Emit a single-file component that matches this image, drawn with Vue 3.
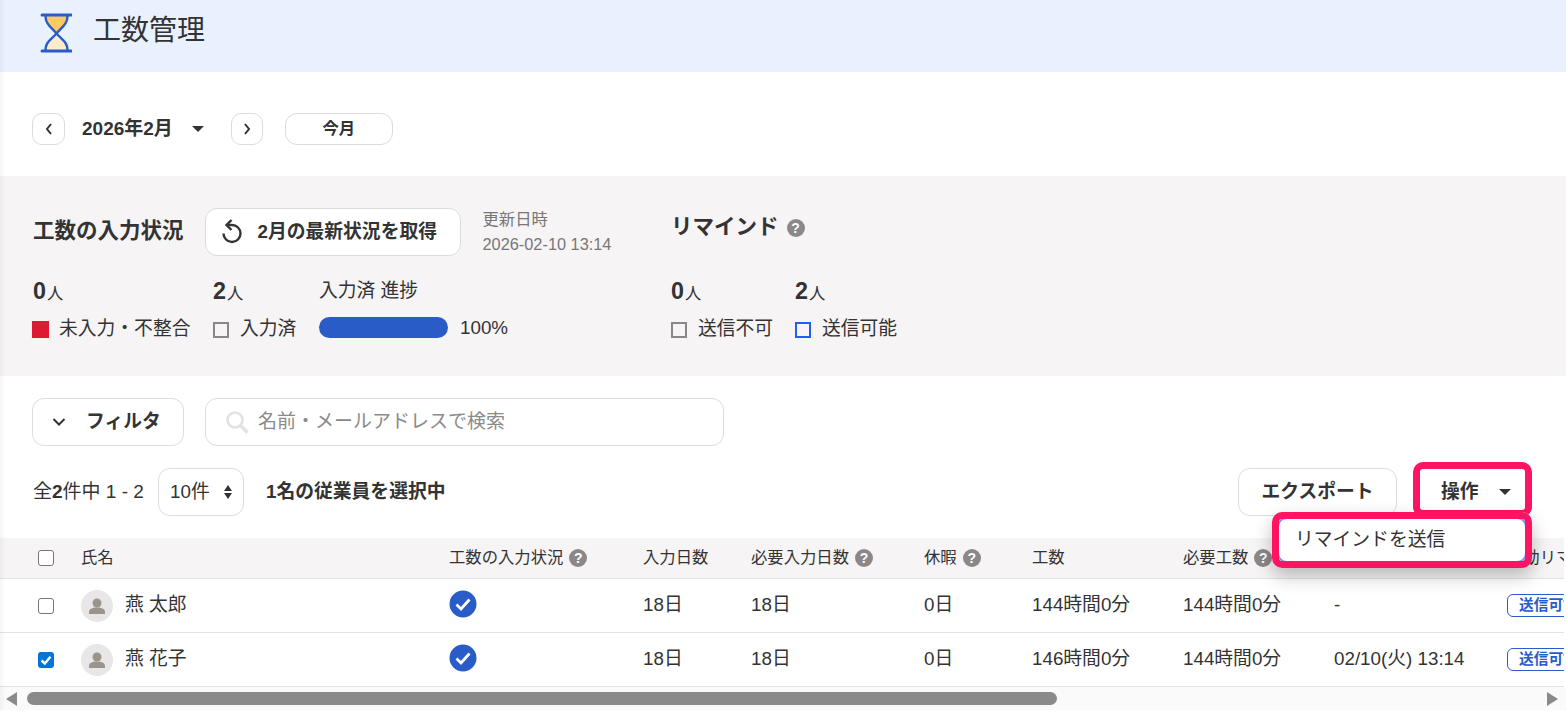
<template>
  <div class="page">
    <div class="edge"></div>
    <header class="head">
      <svg class="glass" viewBox="0 0 32 40" width="32" height="40">
        <path d="M16.500 24C21 26 27 31 27 37H6C6 31 12 26 16.500 24z" fill="#fdeccb" />
        <path d="M6 3H27C27 8 25 11 22.500 14L16.500 20 10.500 14C8 11 6 8 6 3z" fill="#ffc966" />
        <path d="M5.500 3C5.500 11 11 14 16.500 20.500 22 27 27.500 29 27.500 37M27.500 3C27.500 11 22 14 16.500 20.500 11 27 5.500 29 5.500 37" fill="none" stroke="#2a5cc8" stroke-width="2.400" />
        <path d="M2 2h29M2 38h29" fill="none" stroke="#2a5cc8" stroke-width="3" stroke-linecap="round" />
      </svg>
      <h1>工数管理</h1>
    </header>

    <div class="month-row">
      <button class="mini">
        <svg viewBox="0 0 10 12" width="10" height="12"><path d="M7 1 3 6l4 5" class="chev" /></svg>
      </button>
      <span class="month">2026年2月</span>
      <span class="tri month-tri"></span>
      <button class="mini next">
        <svg viewBox="0 0 10 12" width="10" height="12"><path d="M3 1l4 5-4 5" class="chev" /></svg>
      </button>
      <button class="today">今月</button>
    </div>

    <section class="summary">
      <div class="group input-group">
        <div class="group-head">
          <h2>工数の入力状況</h2>
          <button class="refresh">
            <svg class="reload" viewBox="0 0 24 24" width="24" height="24">
              <path d="M7 5h4a8.500 8.500 0 1 1-8.500 8.500" fill="none" stroke="#333" stroke-width="2.400" />
              <path d="M10.500 0 5.500 5l5 5" fill="none" stroke="#333" stroke-width="2.400" />
            </svg>
            <span>2月の最新状況を取得</span>
          </button>
          <div class="updated">
            <div>更新日時</div>
            <div>2026-02-10 13:14</div>
          </div>
        </div>
        <div class="stats input-stats">
          <div class="count"><b>0</b>人</div>
          <div class="count"><b>2</b>人</div>
          <div class="count plain">入力済 進捗</div>
          <div class="legend"><i class="box red"></i>未入力・不整合</div>
          <div class="legend"><i class="box"></i>入力済</div>
          <div class="legend">
            <div class="bar"></div>
            <span class="pct">100%</span>
          </div>
        </div>
      </div>
      <div class="group">
        <div class="group-head remind-head">
          <h2>リマインド</h2>
          <span class="help">?</span>
        </div>
        <div class="stats remind-stats">
          <div class="count"><b>0</b>人</div>
          <div class="count"><b>2</b>人</div>
          <div class="legend"><i class="box"></i>送信不可</div>
          <div class="legend"><i class="box blue"></i>送信可能</div>
        </div>
      </div>
    </section>

    <div class="filter-row">
      <button class="filter">
        <svg viewBox="0 0 14 10" width="14" height="10"><path d="M1.500 2 7 7.500 12.500 2" class="chev" /></svg>
        <span>フィルタ</span>
      </button>
      <div class="search">
        <svg viewBox="0 0 24 24" width="24" height="24">
          <circle cx="10" cy="10" r="7.500" fill="none" stroke="#e2e2e2" stroke-width="2.500" />
          <path d="M15.500 15.500 22.500 22.500" stroke="#e2e2e2" stroke-width="3.500" />
        </svg>
        <span>名前・メールアドレスで検索</span>
      </div>
    </div>

    <div class="tool-row">
      <div class="total">全<b>2</b>件中 1 - 2</div>
      <div class="per-page">
        <span>10件</span>
        <span class="updown"><i class="up"></i><i class="down"></i></span>
      </div>
      <div class="selected">1名の従業員を選択中</div>
      <div class="spacer"></div>
      <button class="export">エクスポート</button>
      <div class="op-wrap">
        <button class="op">操作<span class="tri op-tri"></span></button>
        <div class="op-mark"></div>
        <div class="menu">
          <div class="menu-item">リマインドを送信</div>
        </div>
      </div>
    </div>

    <div class="table-wrap">
      <table>
        <colgroup>
          <col v-for="w in colWidths" :key="w.id" :style="{ width: w.px + 'px' }" />
        </colgroup>
        <thead>
          <tr>
            <th class="check-cell"><span class="check"></span></th>
            <th v-for="col in columns" :key="col.label">
              <span class="th-in">{{ col.label }}<span v-if="col.help" class="help small">?</span></span>
            </th>
          </tr>
        </thead>
        <tbody>
          <tr v-for="row in rows" :key="row.name">
            <td class="check-cell">
              <span class="check" :class="{ on: row.checked }">
                <svg v-if="row.checked" viewBox="0 0 16 16" width="16" height="16"><path d="M3.500 8.500 6.800 11.500 12.500 4.800" fill="none" stroke="#fff" stroke-width="2.400" /></svg>
              </span>
            </td>
            <td>
              <div class="person">
                <span class="avatar">
                  <svg viewBox="0 0 32 32" width="32" height="32">
                    <circle cx="16" cy="13" r="4.500" fill="#9a958c" />
                    <path d="M8 24v-2c0-3 3-4.500 8-4.500s8 1.500 8 4.500v2z" fill="#9a958c" />
                  </svg>
                </span>
                <span>{{ row.name }}</span>
              </div>
            </td>
            <td>
              <svg class="done" viewBox="0 0 28 28" width="28" height="28">
                <circle cx="14" cy="14" r="13.500" fill="#2a5cc8" />
                <path d="M7.500 14.500 12 19l8.500-9.500" fill="none" stroke="#fff" stroke-width="2.800" />
              </svg>
            </td>
            <td>{{ row.days }}</td>
            <td>{{ row.needDays }}</td>
            <td>{{ row.off }}</td>
            <td>{{ row.hours }}</td>
            <td>{{ row.needHours }}</td>
            <td>{{ row.sent }}</td>
            <td><span class="badge">送信可能</span></td>
          </tr>
        </tbody>
      </table>
    </div>

    <div class="scroll">
      <span class="arrow left"></span>
      <div class="track"><div class="thumb"></div></div>
      <span class="arrow right"></span>
    </div>
  </div>
</template>

<script setup>
const colWidths = [81, 368, 194, 108, 173, 108, 151, 151, 173, 200].map((px, id) => ({ id, px }))

const columns = [
  { label: '氏名' },
  { label: '工数の入力状況', help: true },
  { label: '入力日数' },
  { label: '必要入力日数', help: true },
  { label: '休暇', help: true },
  { label: '工数' },
  { label: '必要工数', help: true },
  { label: '最終送信日時' },
  { label: '自動リマインド' }
]

const rows = [
  { name: '燕 太郎', checked: false, days: '18日', needDays: '18日', off: '0日', hours: '144時間0分', needHours: '144時間0分', sent: '-' },
  { name: '燕 花子', checked: true, days: '18日', needDays: '18日', off: '0日', hours: '146時間0分', needHours: '144時間0分', sent: '02/10(火) 13:14' }
]
</script>

<style>
body {
  background: #fff;
}
</style>

<style scoped>
.page {
  position: relative;
  height: 726px;
  overflow: hidden;
  color: #333;
  font-family: "Liberation Sans", "Noto Sans CJK JP", sans-serif;
  font-size: 18.8px;
  line-height: 1.3;
}

.edge {
  position: absolute;
  left: 0;
  top: 0;
  bottom: 16px;
  width: 6px;
  background: linear-gradient(90deg, rgba(0, 0, 0, 0.035), rgba(0, 0, 0, 0));
  pointer-events: none;
  z-index: 5;
}

button {
  font-family: inherit;
  line-height: 1.3;
  color: #333;
  background: #fff;
  border: 1px solid #dcdcdc;
  border-radius: 12px;
  padding: 0;
  display: flex;
  align-items: center;
  justify-content: center;
}

h1,
h2 {
  margin: 0;
}

.chev {
  fill: none;
  stroke: #333;
  stroke-width: 2;
}

.tri {
  display: inline-block;
  width: 0;
  height: 0;
  border-left: 6.500px solid transparent;
  border-right: 6.500px solid transparent;
  border-top: 6px solid #333;
}

.head {
  height: 72px;
  box-sizing: border-box;
  padding: 0 0 10px 40px;
  background: #e9f1fe;
  display: flex;
  align-items: center;
}

.glass {
  margin-top: 3px;
  flex: none;
}

.head h1 {
  margin-left: 21px;
  font-size: 28px;
  font-weight: 400;
}

.month-row {
  height: 32px;
  margin-top: 41px;
  padding-left: 32px;
  display: flex;
  align-items: center;
}

.mini {
  width: 33px;
  height: 32px;
  border-radius: 10px;
}

.mini.next {
  width: 32px;
}

.month {
  margin-left: 17px;
  font-size: 19px;
  font-weight: 700;
}

.month-tri {
  margin-left: 19px;
  margin-right: 27px;
}

.today {
  width: 108px;
  height: 32px;
  margin-left: 22px;
  border-radius: 12px;
  font-size: 16.330px;
  font-weight: 700;
}

.summary {
  height: 200px;
  margin-top: 31px;
  box-sizing: border-box;
  padding: 32px 32px 0 33px;
  background: #f6f4f5;
  display: flex;
}

.input-group {
  width: 638px;
  flex: none;
}

.group-head {
  height: 48px;
  display: flex;
  align-items: center;
}

.group-head h2 {
  font-size: 21.500px;
  font-weight: 700;
}

.refresh {
  width: 256px;
  height: 48px;
  margin-left: 21px;
  padding-left: 15px;
  justify-content: flex-start;
  font-size: 18.800px;
  font-weight: 700;
  flex: none;
}

.refresh span {
  margin-left: 13px;
}

.reload {
  overflow: visible;
}

.updated {
  margin-left: 22px;
  font-size: 16.330px;
  line-height: 25px;
  color: #777;
  margin-top: -1px;
}

.remind-head {
  margin-top: -4px;
}

.help {
  width: 18px;
  height: 18px;
  margin-left: 8px;
  border-radius: 50%;
  background: #8c8888;
  color: #fff;
  font-size: 14px;
  font-weight: 700;
  line-height: 18px;
  text-align: center;
  display: inline-block;
  flex: none;
}

.stats {
  display: grid;
  grid-auto-rows: 30px;
  row-gap: 8px;
  margin-top: 20px;
}

.remind-head + .stats {
  margin-top: 24px;
}

.input-stats {
  grid-template-columns: 180px 106px auto;
}

.remind-stats {
  grid-template-columns: 124px auto;
}

.count {
  display: flex;
  align-items: baseline;
  font-size: 16.330px;
  line-height: 30px;
}

.count b {
  font-size: 23.300px;
  margin-right: 1px;
}

.count.plain {
  font-size: 18.800px;
}

.legend {
  display: flex;
  align-items: center;
}

.box {
  width: 16px;
  height: 16px;
  box-sizing: border-box;
  border: 2px solid #888;
  margin-right: 11px;
  margin-top: 1px;
  flex: none;
}

.box.red {
  width: 17px;
  height: 17px;
  background: #dc1b33;
  border: none;
  margin-left: -1px;
  margin-right: 10px;
}

.box.blue {
  border-color: #1f5ef2;
}

.bar {
  width: 129px;
  height: 21px;
  border-radius: 11px;
  background: #2a5cc8;
  margin-top: -3px;
}

.pct {
  margin-left: 12px;
  margin-top: -2px;
}

.filter-row {
  height: 48px;
  margin-top: 22px;
  padding-left: 32px;
  display: flex;
  gap: 21px;
}

.filter {
  width: 152px;
  height: 48px;
  padding-left: 19px;
  justify-content: flex-start;
  font-size: 18.800px;
  font-weight: 700;
}

.filter span {
  margin-left: 20px;
}

.search {
  width: 519px;
  height: 48px;
  box-sizing: border-box;
  border: 1px solid #dcdcdc;
  border-radius: 12px;
  padding-left: 19px;
  display: flex;
  align-items: center;
  color: #8a8a8a;
  font-size: 19px;
}

.search span {
  margin-left: 9px;
}

.tool-row {
  height: 48px;
  margin-top: 22px;
  padding: 0 40px 0 32px;
  display: flex;
  align-items: center;
}

.total {
  width: 113px;
  font-size: 19px;
  white-space: nowrap;
  padding-left: 1px;
  box-sizing: border-box;
}

.total b {
  font-weight: 700;
}

.per-page {
  width: 86px;
  height: 48px;
  box-sizing: border-box;
  margin-left: 13px;
  padding: 0 11px;
  border: 1px solid #dcdcdc;
  border-radius: 12px;
  display: flex;
  align-items: center;
  justify-content: space-between;
}

.updown {
  display: flex;
  flex-direction: column;
  gap: 2px;
}

.updown i {
  width: 0;
  height: 0;
  border-left: 4px solid transparent;
  border-right: 4px solid transparent;
}

.up {
  border-bottom: 6px solid #333;
}

.down {
  border-top: 6px solid #333;
}

.selected {
  margin-left: 22px;
  font-weight: 700;
}

.spacer {
  flex: 1;
}

.export {
  width: 159px;
  height: 48px;
  font-size: 18.800px;
  font-weight: 700;
}

.op-wrap {
  position: relative;
  width: 107px;
  height: 48px;
  margin-left: 22px;
}

.op {
  width: 100%;
  height: 100%;
  padding-left: 22px;
  justify-content: flex-start;
  border: none;
  border-radius: 0;
  font-size: 18.800px;
  font-weight: 700;
}

.op-tri {
  margin-left: 20px;
}

.op-mark {
  position: absolute;
  inset: -6px -6px -1px -6px;
  border: 7px solid #ff1464;
  border-radius: 10px;
  z-index: 3;
}

.menu {
  position: absolute;
  left: -147px;
  top: 44px;
  width: 260px;
  height: 56px;
  border-radius: 10px;
  background: #fff;
  box-shadow: 0 8px 18px rgba(0, 0, 0, 0.25);
  z-index: 4;
}

.menu-item {
  position: absolute;
  inset: 5px;
  border: 2px solid #6ea0ff;
  border-radius: 10px;
  background: #fff;
  padding-left: 16px;
  display: flex;
  align-items: center;
}

.menu::after {
  content: "";
  position: absolute;
  inset: 0;
  border: 7px solid #ff1464;
  border-radius: 10px;
}

.table-wrap {
  margin: 22px 2px 0 0;
  overflow: hidden;
}

table {
  width: 1707px;
  table-layout: fixed;
  border-collapse: separate;
  border-spacing: 0;
}

th {
  height: 40px;
  padding: 0;
  background: #f6f4f5;
  border-bottom: 1px solid #e3e3e3;
  font-size: 16.330px;
  font-weight: 400;
  text-align: left;
  white-space: nowrap;
}

.th-in {
  display: inline-flex;
  align-items: center;
}

.help.small {
  margin-left: 6px;
}

td {
  height: 53px;
  padding: 0;
  border-bottom: 1px solid #e3e3e3;
  white-space: nowrap;
}

.check-cell {
  padding-left: 38px;
}

.check {
  display: block;
  width: 16px;
  height: 16px;
  box-sizing: border-box;
  border: 1.500px solid #777;
  border-radius: 3px;
  background: #fff;
}

.check.on {
  border: none;
  background: #0075d9;
}

.check svg {
  display: block;
}

.person {
  display: flex;
  align-items: center;
  gap: 12px;
}

.avatar {
  width: 32px;
  height: 32px;
  border-radius: 50%;
  background: #e8e6e6;
  flex: none;
}

.avatar svg,
.done {
  display: block;
}

.done {
  margin-top: -4px;
}

.badge {
  display: inline-block;
  box-sizing: border-box;
  height: 23px;
  padding: 0 11px;
  border: 1px solid #2a5cc8;
  border-radius: 6px;
  color: #2a5cc8;
  font-size: 14.700px;
  font-weight: 700;
  line-height: 21px;
  vertical-align: 1px;
}

.scroll {
  height: 23px;
  background: #fafafa;
  display: flex;
  align-items: center;
  padding: 0 8px 0 6px;
}

.track {
  flex: 1;
  margin: 0 10px 0 10px;
}

.thumb {
  width: 1030px;
  height: 13px;
  border-radius: 7px;
  background: #8a8a8a;
}

.arrow {
  width: 0;
  height: 0;
  border-top: 7px solid transparent;
  border-bottom: 7px solid transparent;
}

.arrow.left {
  border-right: 11px solid #8a8a8a;
}

.arrow.right {
  border-left: 11px solid #8a8a8a;
}
</style>
